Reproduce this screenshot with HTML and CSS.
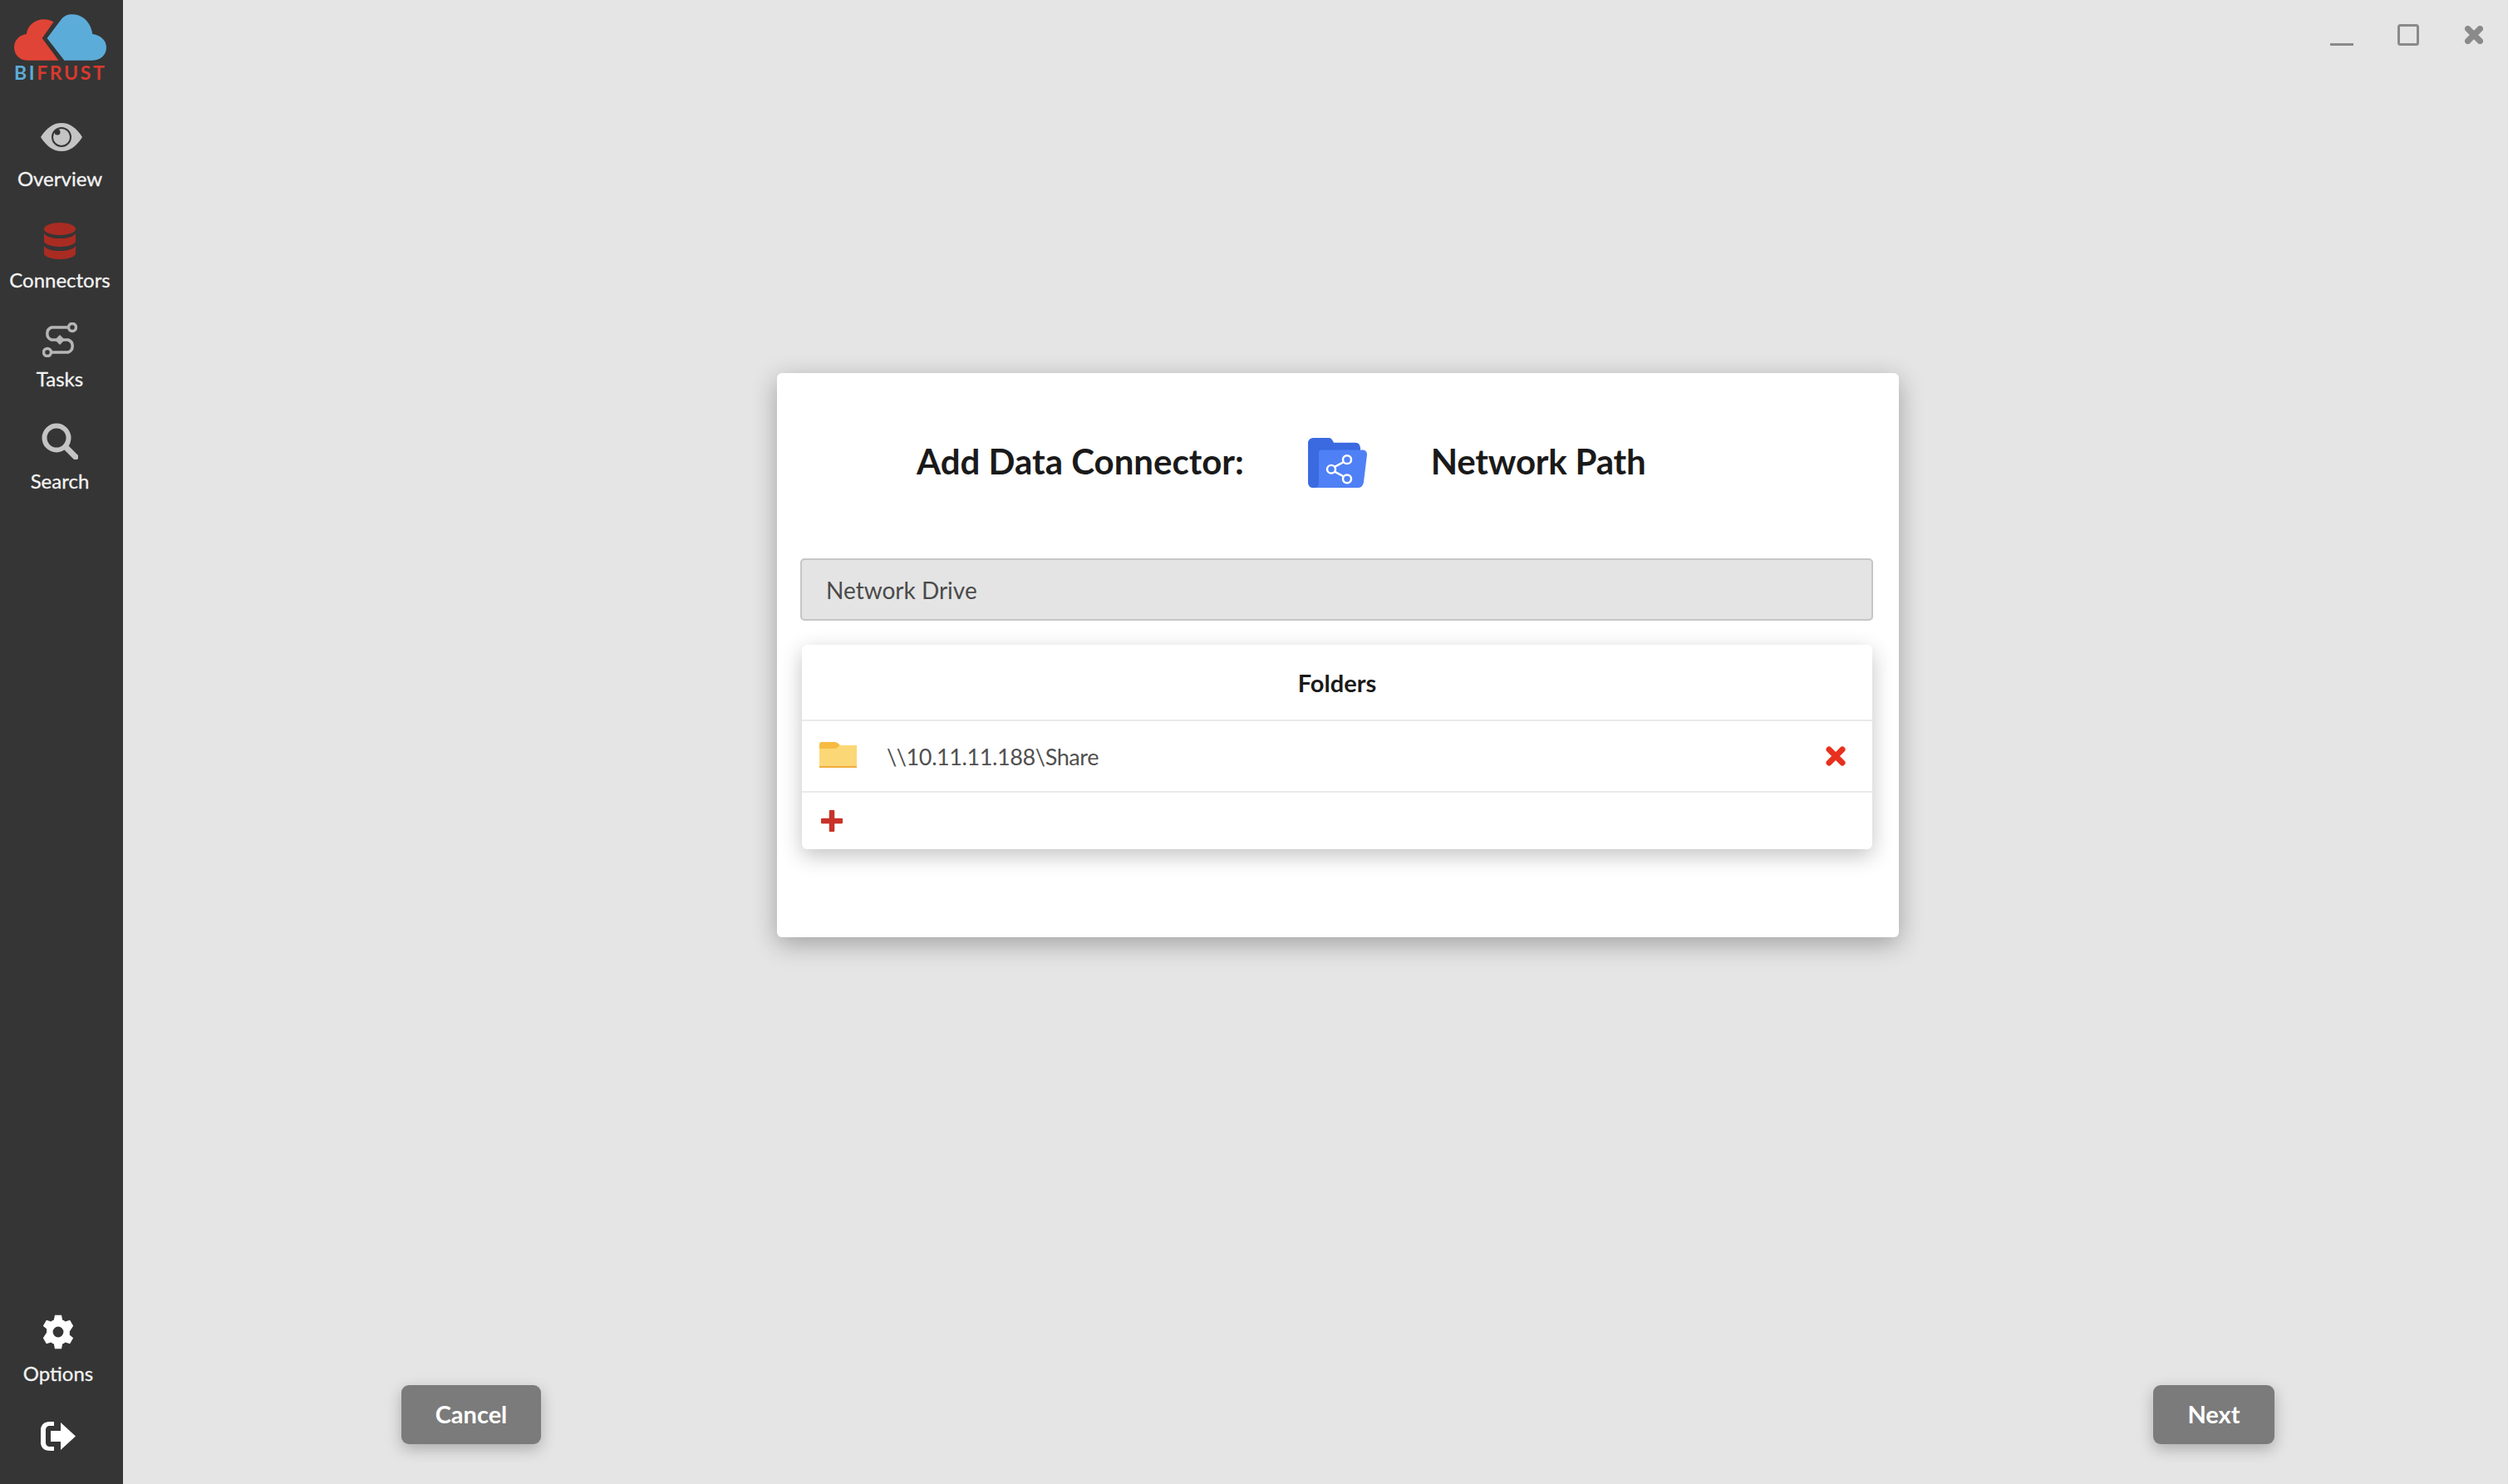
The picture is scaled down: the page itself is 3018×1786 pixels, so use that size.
FILE: index.html
```html
<!DOCTYPE html>
<html lang="en">
<head>
    <meta charset="UTF-8">
    <title>Bifrust</title>
    <link rel="stylesheet" href="styles.css">
</head>
<body>
    <div class="app">
        <aside class="sidebar">
            <div class="logo">
                <svg class="logo-cloud" viewBox="0 0 112 56" width="111" height="56">
                    <path fill="#e04436" d="M17 56C7 56 0 49 0 40c0-9 7-15 15-16 1-10 10-18 21-18 4 0 8 1 12 3L34 29l20 27z"/>
                    <path fill="#5cacd9" d="M61 56 40 29 58 5c3-3 7-5 12-5 11 0 19 6 23 16 1 3 2 6 2 8 9 1 17 7 17 16 0 10-8 16-18 16z"/>
                </svg>
                <div class="logo-text"><span class="logo-bi">BI</span>FRUST</div>
            </div>

            <a class="nav-item">
                <span class="nav-icon nav-icon-eye">
                    <svg viewBox="0 0 50 34" width="50" height="34">
                        <path fill="#c4c4c4" d="M0 17C7 6 15 0 25 0s18 6 25 17c-7 11-15 17-25 17S7 28 0 17z"/>
                        <circle cx="25" cy="17" r="11" fill="none" stroke="#353535" stroke-width="2"/>
                        <circle cx="20" cy="11" r="3.500" fill="#353535"/>
                    </svg>
                </span>
                <span class="nav-label">Overview</span>
            </a>
            <a class="nav-item">
                <span class="nav-icon nav-icon-db">
                    <svg viewBox="0 0 38 44" width="38" height="44">
                        <ellipse cx="19" cy="7.500" rx="19" ry="7.500" fill="#a92c22"/>
                        <path fill="#a92c22" d="M0 13c3 4 10 6 19 6s16-2 19-6v9c0 4-9 7-19 7S0 26 0 22z"/>
                        <path fill="#a92c22" d="M0 28c3 4 10 6 19 6s16-2 19-6v9c0 4-9 7-19 7S0 41 0 37z"/>
                    </svg>
                </span>
                <span class="nav-label">Connectors</span>
            </a>
            <a class="nav-item">
                <span class="nav-icon">
                    <svg viewBox="0 0 42 42" width="42" height="42" fill="none" stroke="#b5b5b5" stroke-width="3.500">
                        <circle cx="36" cy="6" r="4.500"/>
                        <circle cx="6" cy="36" r="4.500"/>
                        <path d="M31 6H11a8 8 0 0 0 0 15h20a8 8 0 0 1 0 15H11"/>
                        <path fill="#b5b5b5" stroke="none" d="M21 15l6 6-6 6-6-6z"/>
                    </svg>
                </span>
                <span class="nav-label nav-label-tight">Tasks</span>
            </a>
            <a class="nav-item">
                <span class="nav-icon">
                    <svg viewBox="0 0 44 44" width="44" height="44" fill="none" stroke="#c4c4c4">
                        <circle cx="18" cy="18" r="14.500" stroke-width="6"/>
                        <path d="M29 29l12 12" stroke-width="7" stroke-linecap="round"/>
                    </svg>
                </span>
                <span class="nav-label nav-label-search">Search</span>
            </a>

            <div class="sidebar-bottom">
                <a class="nav-item">
                    <span class="nav-icon">
                        <svg viewBox="0 0 24 24" width="44" height="44">
                            <path fill="#fff" fill-rule="evenodd" d="M14.200 1h-4.400l-.6 3.100c-.7.3-1.300.6-1.900 1.100L4.300 4.200 2.100 8l2.400 2.100a8 8 0 0 0 0 2.200L2.100 16l2.200 3.800 3-1c.6.5 1.200.8 1.900 1.100l.6 3.100h4.400l.6-3.100c.7-.3 1.300-.6 1.900-1.100l3 1 2.200-3.800-2.400-2.100a8 8 0 0 0 0-2.200L21.900 8l-2.200-3.800-3 1c-.6-.5-1.200-.8-1.900-1.100zM12 8.500a3.500 3.500 0 1 1 0 7 3.500 3.500 0 0 1 0-7z"/>
                        </svg>
                    </span>
                    <span class="nav-label">Options</span>
                </a>
                <a class="logout">
                    <svg viewBox="0 0 44 35" width="44" height="35">
                        <path fill="#fff" d="M13 0h5v5h-5c-3 0-5 2-5 5v15c0 3 2 5 5 5h5v5h-5C6 35 2 31 2 25V10C2 4 6 0 13 0z"/>
                        <path fill="#fff" d="M26 1l18 16.500L26 34V24H14V11h12z"/>
                    </svg>
                </a>
            </div>
        </aside>

        <main class="main">
            <div class="window-bar">
                <svg class="win-btn" viewBox="0 0 28 26" width="28" height="26"><path d="M0 24.500h28" stroke="#8a8a8a" stroke-width="3"/></svg>
                <svg class="win-btn" viewBox="0 0 26 26" width="26" height="26"><rect x="1.500" y="1.500" width="23" height="23" rx="2" fill="none" stroke="#8a8a8a" stroke-width="3"/></svg>
                <svg class="win-btn win-close" viewBox="0 0 24 24" width="22" height="22"><path d="M4 4l16 16M20 4L4 20" stroke="#8a8a8a" stroke-width="8" stroke-linecap="round"/></svg>
            </div>

            <section class="card">
                <header class="card-head">
                    <h1 class="card-title">Add Data Connector:</h1>
                    <svg class="head-icon" viewBox="0 0 71 62" width="71" height="60" preserveAspectRatio="none">
                        <path fill="#3b6ae0" d="M6 0h19c3 0 4 2 6 6h26c4 0 6 3 6 8v40c0 5-3 8-8 8H6c-4 0-6-3-6-7V6c0-3 3-6 6-6z"/>
                        <path fill="#4f80f5" d="M16 15h49c4 0 6 2 6 6l-4 34c-1 5-3 7-8 7H8c4 0 5-3 5-7l0-37c0-2 1-3 3-3z"/>
                        <g fill="none" stroke="#fff" stroke-width="2.500">
                            <circle cx="47" cy="27" r="5"/>
                            <circle cx="28" cy="39" r="5"/>
                            <circle cx="47" cy="51" r="5"/>
                            <path d="M43 30l-11 6M32 42l11 6"/>
                        </g>
                    </svg>
                    <h1 class="card-title card-title-path">Network Path</h1>
                </header>

                <div class="name-field">Network Drive</div>

                <div class="folders">
                    <div class="folders-head">Folders</div>
                    <div class="folder-row">
                        <svg class="folder-icon" viewBox="0 0 45 31" width="45" height="31">
                            <path fill="#f6bb42" d="M0 3c0-2 1-3 3-3h15c3 0 5 2 7 4H45v27H0z"/>
                            <path fill="#fbd776" d="M0 8h17c3 0 5-1 7-4h21v25H0z"/>
                            <path fill="#f0ac3c" d="M0 29h45v2H0z"/>
                        </svg>
                        <span class="folder-path">\\10.11.11.188\Share</span>
                        <svg class="folder-remove" viewBox="0 0 24 24" width="24" height="24">
                            <path d="M4 4l16 16M20 4L4 20" stroke="#e8301f" stroke-width="7" stroke-linecap="round"/>
                        </svg>
                    </div>
                    <div class="folder-add">
                        <svg viewBox="0 0 26 26" width="26" height="26">
                            <path d="M13 2v22M2 13h22" stroke="#c8322a" stroke-width="6.500" stroke-linecap="round"/>
                        </svg>
                    </div>
                </div>
            </section>

            <footer class="actions">
                <button class="btn btn-cancel">Cancel</button>
                <button class="btn btn-next">Next</button>
            </footer>
        </main>
    </div>
</body>
</html>
```

FILE: styles.css
```css
* {
    box-sizing: border-box;
}
html, body {
    margin: 0;
    height: 100%;
}
body {
    background-color: #e5e5e5;
    font-family: Lato, "Open Sans", sans-serif;
    color: #1a1a1a;
    overflow: hidden;
}
.app {
    display: flex;
    height: 100%;
}

/* left bar */
.sidebar {
    width: 148px;
    flex: none;
    background-color: #353535;
    display: flex;
    flex-direction: column;
    color: #fff;
}
.logo {
    height: 143px;
    padding: 17px 0 0 17px;
}
.logo-cloud {
    display: block;
}
.logo-text {
    font-family: Lato, sans-serif;
    font-size: 23px;
    font-weight: 700;
    line-height: 22px;
    letter-spacing: 2.6px;
    color: #d9392e;
    margin-top: 3px;
    white-space: nowrap;
}
.logo-bi {
    color: #5cacd9;
}
.nav-item {
    height: 122px;
    padding-right: 4px;
    display: flex;
    flex-direction: column;
    align-items: center;
}
.nav-icon {
    height: 44px;
    display: flex;
    align-items: center;
    justify-content: center;
}
.nav-icon-eye {
    margin-left: 4px;
}
.nav-icon-db {
    margin-top: 3px;
    margin-bottom: -3px;
}
.nav-label {
    margin-top: 14px;
    font-size: 24px;
    line-height: 28px;
    color: #f2f2f2;
    -webkit-text-stroke: 0.3px #f2f2f2;
}
.nav-label-tight {
    margin-top: 11px;
}
.nav-label-search {
    margin-top: 12px;
}
.sidebar-bottom {
    margin-top: auto;
    padding-right: 4px;
    padding-bottom: 40px;
}
.sidebar-bottom .nav-item {
    height: 86px;
}
.logout {
    display: flex;
    justify-content: center;
    margin-top: 44px;
    padding-right: 6px;
}
.logout svg {
    display: block;
}

/* main area */
.main {
    flex: 1;
    display: flex;
    flex-direction: column;
}
.window-bar {
    height: 449px;
    display: flex;
    align-items: flex-start;
    justify-content: flex-end;
    gap: 53px;
    padding: 29px 30px 0 0;
}
.win-btn {
    display: block;
}
.win-close {
    margin-top: 2px;
    margin-left: 2px;
}
.card {
    width: 1350px;
    height: 679px;
    margin-left: 787px;
    padding: 0 31px 0 28px;
    background-color: #fff;
    border-radius: 6px;
    box-shadow: 0 8px 30px rgba(0,0,0,0.3);
}
.card-head {
    height: 212px;
    margin-bottom: 11px;
    padding-left: 140px;
    display: flex;
    align-items: center;
}
.card-title {
    margin: 0;
    font-size: 42px;
    font-weight: 700;
    white-space: nowrap;
}
.card-title-path {
    letter-spacing: -0.2px;
}
.head-icon {
    margin: 3px 77px 0 77px;
}
.name-field {
    height: 75px;
    padding-left: 29px;
    display: flex;
    align-items: center;
    background-color: #e4e4e4;
    border: 2px solid #c6c6c6;
    border-radius: 5px;
    font-size: 28px;
    color: #4a4a4a;
}
.folders {
    margin: 29px 1px 0 2px;
    background-color: #fff;
    border-radius: 6px;
    box-shadow: 0 8px 26px rgba(0,0,0,0.24);
}
.folders-head {
    height: 92px;
    display: flex;
    align-items: center;
    justify-content: center;
    border-bottom: 2px solid #eaeaea;
    font-size: 29px;
    font-weight: 700;
}
.folder-row {
    height: 86px;
    padding: 0 32px 0 21px;
    display: flex;
    align-items: center;
    gap: 36px;
    border-bottom: 2px solid #eaeaea;
}
.folder-icon {
    margin-top: -3px;
}
.folder-path {
    font-size: 27px;
    letter-spacing: -0.4px;
    color: #505050;
}
.folder-remove {
    margin-left: auto;
}
.folder-add {
    height: 68px;
    padding-left: 23px;
    display: flex;
    align-items: center;
}
.actions {
    margin-top: auto;
    padding: 0 281px 48px 335px;
    display: flex;
    justify-content: space-between;
}
.btn {
    height: 71px;
    padding-bottom: 3px;
    border: 0;
    border-radius: 9px;
    background-color: #7b7b7b;
    color: #fff;
    font-family: inherit;
    font-size: 29px;
    font-weight: 700;
    box-shadow: 0 6px 18px rgba(0,0,0,0.25);
}
.btn-cancel {
    width: 168px;
}
.btn-next {
    width: 146px;
}
```
